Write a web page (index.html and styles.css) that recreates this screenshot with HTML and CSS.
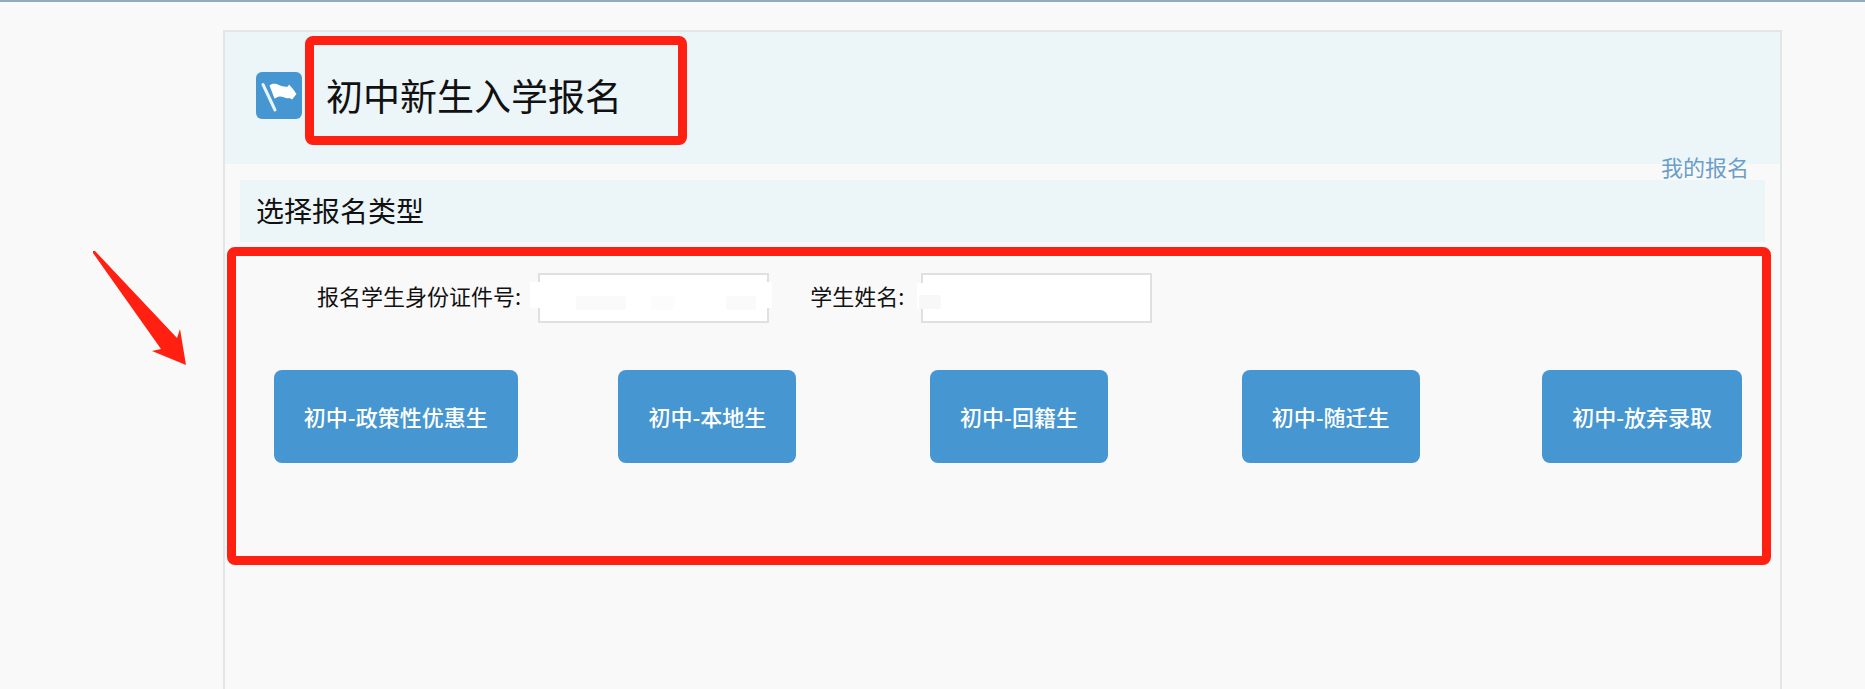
FILE: index.html
```html
<!DOCTYPE html>
<html lang="zh-CN">
<head>
<meta charset="utf-8">
<title>初中新生入学报名</title>
<link rel="stylesheet" href="styles.css">
</head>
<body>
<main class="page">
  <svg class="arrow" width="96" height="118" viewBox="0 0 96 118" aria-hidden="true">
    <path d="M2 1 L4 1 L86 88 L89 79 L95 115 L61 101 L70 99 L2 3 Z" fill="#ff2012"/>
  </svg>
  <div class="card">
    <header class="card-header">
      <svg class="flag" width="46" height="47" viewBox="0 0 46 47" aria-hidden="true">
        <rect width="46" height="47" rx="6" fill="#4696d2"/>
        <path d="M7 12.500 L19 38" stroke="#e8f5fc" stroke-width="3" stroke-linecap="round"/>
        <path d="M13.500 13.500 C16 11 20 11.500 23 13 C26 14.500 29 15 32 14.500 L33 12.500 L37 17 L40.500 22 L36 27.500 L33.500 26 C30 27 27 24.500 24 24.500 C21.500 24.500 20.500 26 18.500 26.500 Z" fill="#fff"/>
      </svg>
      <h1 class="title">初中新生入学报名</h1>
      <a class="my-link" href="#">我的报名</a>
    </header>
    <section class="section">
      <h2 class="section-title">选择报名类型</h2>
      <form class="panel">
        <div class="fields">
          <label class="label" for="id-number">报名学生身份证件号:</label>
          <div class="field field-id"><input class="input" id="id-number" type="text"></div>
          <label class="label label-name" for="student-name">学生姓名:</label>
          <div class="field field-name"><input class="input" id="student-name" type="text"></div>
        </div>
        <div class="types">
          <button class="type" type="button">初中-政策性优惠生</button>
          <button class="type" type="button">初中-本地生</button>
          <button class="type" type="button">初中-回籍生</button>
          <button class="type" type="button">初中-随迁生</button>
          <button class="type" type="button">初中-放弃录取</button>
        </div>
      </form>
    </section>
  </div>
</main>
</body>
</html>
```

FILE: styles.css
```css
* {
  box-sizing: border-box;
}

body {
  margin: 0;
  background: #f9f9f9;
  color: #111;
  font-family: "Noto Sans CJK SC", sans-serif;
  font-size: 22px;
}

.page {
  position: relative;
  display: flex;
  min-height: 100vh;
  padding: 28px 83px 0 223px;
  border-top: 2px solid #92abc5;
  overflow: hidden;
}

.arrow {
  position: absolute;
  left: 91px;
  top: 248px;
}

.card {
  flex: 1;
  border: 2px solid #e3e5e6;
  border-bottom: 0;
}

.card-header {
  position: relative;
  display: flex;
  align-items: center;
  height: 132px;
  padding: 0 31px 6px;
  background: #ecf5f8;
}

.flag {
  flex: none;
}

.title {
  position: relative;
  margin: 0 0 0 24px;
  font-size: 37px;
  font-weight: 400;
  line-height: 54px;
}

.title::after {
  content: "";
  position: absolute;
  inset: -32px -65px -23px -21px;
  border: 9px solid #ff2012;
  border-radius: 8px;
}

.my-link {
  position: absolute;
  right: 31px;
  bottom: -18px;
  color: #6a9fcb;
  line-height: 32px;
  text-decoration: none;
}

.section {
  padding-top: 16px;
}

.section-title {
  margin: 0 15px;
  padding: 0 16px 2px;
  background: #ecf5f8;
  font-size: 28px;
  font-weight: 400;
  line-height: 60px;
}

.panel {
  position: relative;
  padding-top: 31px;
}

.panel::after {
  content: "";
  position: absolute;
  inset: 5px 9px -102px 2px;
  border: 9px solid #ff2012;
  border-radius: 8px;
  pointer-events: none;
}

.fields {
  display: flex;
  align-items: center;
  padding-left: 92px;
}

.label {
  padding-bottom: 6px;
  line-height: 32px;
}

.label-name {
  margin-left: 41px;
}

.field {
  position: relative;
  width: 231px;
  margin-left: 17px;
}

.input {
  display: block;
  width: 100%;
  height: 50px;
  padding: 0 10px;
  border: 2px solid #e0e0e0;
  background: #fff;
  font: inherit;
}

/* Masked personal data */
.field::before,
.field::after {
  content: "";
  position: absolute;
  pointer-events: none;
}

.field-id::before {
  inset: 9px -3px 15px -8px;
  background: #fff;
}

.field-id::after {
  left: 38px;
  top: 23px;
  width: 180px;
  height: 14px;
  background: linear-gradient(90deg, #fafafa 50px, transparent 50px 75px, #fcfcfc 75px 98px, transparent 98px 150px, #fafafa 150px);
}

.field-name::before {
  left: -4px;
  top: 10px;
  width: 24px;
  height: 26px;
  background: #fff;
}

.field-name::after {
  left: -2px;
  top: 22px;
  width: 22px;
  height: 14px;
  background: #f8f8f8;
}

.types {
  display: grid;
  grid-template-columns: repeat(5, 1fr);
  justify-items: center;
  margin: 47px -18px 0 15px;
}

.type {
  height: 93px;
  padding: 0 30px 2px;
  border: 0;
  border-radius: 8px;
  background: #4696d2;
  color: #fff;
  font: inherit;
  font-weight: 500;
  white-space: nowrap;
}
```
